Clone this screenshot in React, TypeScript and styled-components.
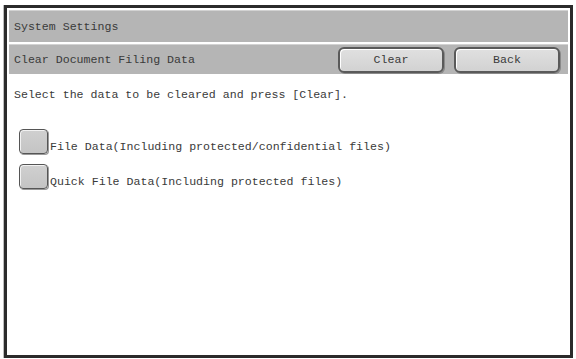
import React from "react";
import styled, { createGlobalStyle } from "styled-components";

const Global = createGlobalStyle`
  html, body { margin: 0; padding: 0; background: #ffffff; }
  body { font-family: "Liberation Mono", "Courier New", monospace; }
`;

const Frame = styled.div`
  box-sizing: border-box;
  margin: 5px 0 0 4px;
  width: 569px;
  height: 353px;
  border: 3px solid #2b2b2b;
  box-shadow: -1px 0 0 #bdbdbd;
  padding: 2px 2px 0 2px;
  display: flex;
  flex-direction: column;
  gap: 2px;
  background: #fff;
`;

const Bar = styled.div<{ $h: number }>`
  box-sizing: border-box;
  height: ${(p) => p.$h}px;
  background: #b5b5b5;
  border-top: 1px solid #d2d2d2;
  display: flex;
  align-items: center;
  padding: 0 8px 0 5px;
  font-size: 11.6px;
  color: #3a3a3a;
`;

const BarTitle = styled.span`
  flex: 1;
`;

const Buttons = styled.div`
  display: flex;
  gap: 10px;
`;

const Button = styled.button`
  box-sizing: border-box;
  width: 106px;
  height: 26px;
  border: 2px solid #5a5a5a;
  border-radius: 6px;
  background: linear-gradient(#e0e0e0, #d2d2d2);
  box-shadow: inset 1px 1px 0 #ffffff, 1px 1px 0 #8a8a8a;
  font-family: "Liberation Mono", "Courier New", monospace;
  font-size: 11.6px;
  color: #3a3a3a;
  padding: 0;
`;

const Body = styled.div`
  padding: 11px 0 0 5px;
  display: flex;
  flex-direction: column;
`;

const Message = styled.div`
  font-size: 11.6px;
  color: #3a3a3a;
  line-height: 16px;
  margin-bottom: 26px;
`;

const Options = styled.div`
  display: flex;
  flex-direction: column;
  gap: 10px;
  padding-left: 5px;
`;

const Option = styled.label`
  display: flex;
  align-items: flex-end;
  font-size: 11.6px;
  color: #3a3a3a;
  line-height: 14px;
`;

const Check = styled.span`
  box-sizing: border-box;
  width: 29px;
  height: 25px;
  border: 1.5px solid #555;
  border-radius: 4px;
  background: linear-gradient(#d0d0d0, #c4c4c4);
  box-shadow: inset 1px 1px 0 #f2f2f2, 1px 1px 0 #9a9a9a;
  margin-right: 2px;
  flex: none;
`;

export default function App() {
  return (
    <>
      <Global />
      <Frame>
        <Bar $h={32}>
          <BarTitle>System Settings</BarTitle>
        </Bar>
        <Bar $h={30}>
          <BarTitle>Clear Document Filing Data</BarTitle>
          <Buttons>
            <Button>Clear</Button>
            <Button>Back</Button>
          </Buttons>
        </Bar>
        <Body>
          <Message>Select the data to be cleared and press [Clear].</Message>
          <Options>
            <Option>
              <Check />
              File Data(Including protected/confidential files)
            </Option>
            <Option>
              <Check />
              Quick File Data(Including protected files)
            </Option>
          </Options>
        </Body>
      </Frame>
    </>
  );
}
